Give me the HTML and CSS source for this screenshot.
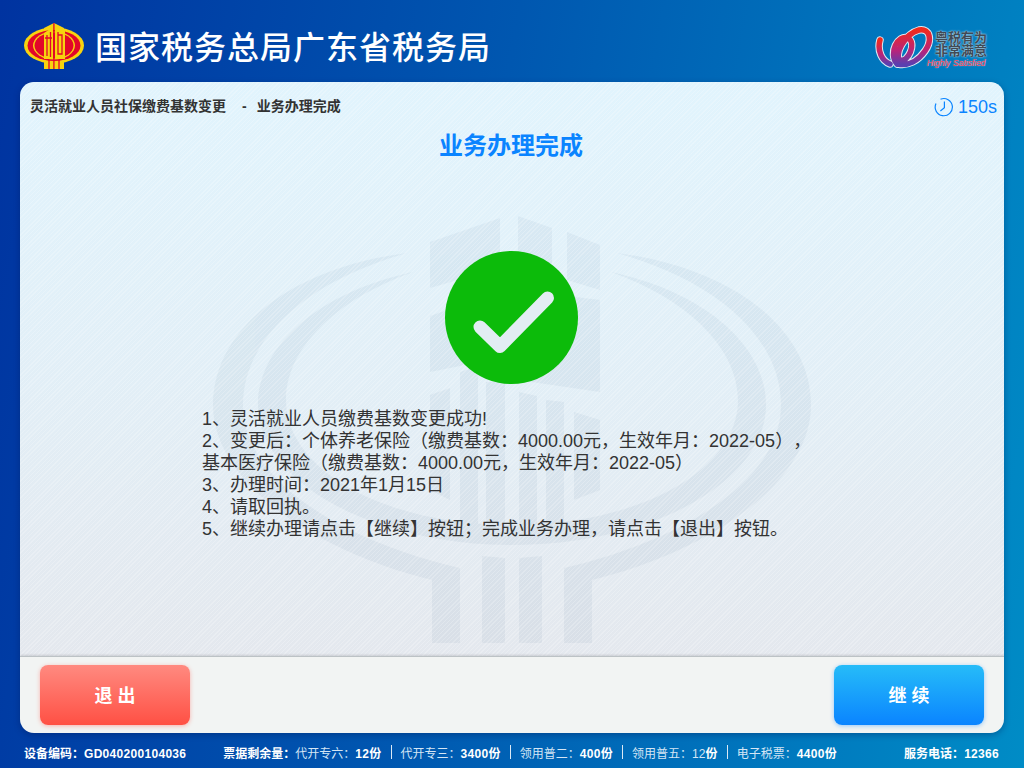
FILE: index.html
```html
<!DOCTYPE html>
<html lang="zh-CN">
<head>
    <meta charset="UTF-8" />
    <title>业务办理完成</title>
    <link rel="stylesheet" href="styles.css">
</head>
<body>
    <div class="page">
        <!-- Header -->
        <div class="header">
            <svg class="emblem" viewBox="0 0 60 46">
                <path d="M20 5 L30 0 L40 5 V10 H20 Z" fill="#f7d30f"/>
                <rect x="20" y="37" width="20" height="9" fill="#f7d30f"/>
                <ellipse cx="30" cy="22.500" rx="30" ry="18" fill="#f7d30f"/>
                <ellipse cx="30" cy="22.500" rx="26.500" ry="15.500" fill="#e2062a"/>
                <ellipse cx="30" cy="22.500" rx="21" ry="14" fill="#f7d30f"/>
                <ellipse cx="30" cy="22.500" rx="19.500" ry="13" fill="#e2062a"/>
                <path d="M20 10 L29 4 V36 H20 Z M31 4 L41 7 V36 H31 Z" fill="#f7d30f"/>
                <path d="M23 12 V33 M26.500 9 V34 M34 9 V31 H38 V12 H34 M29.900 0 V46 M25 37 V46 M35 37 V46 M21 15 H28" stroke="#e2062a" stroke-width="1.300" fill="none"/>
            </svg>
            <div class="site-name">国家税务总局广东省税务局</div>
            <div class="brand">
                <svg class="swirl" viewBox="875 22 60 46">
                    <defs>
                        <linearGradient id="swirl-grad" x1="0" y1="0" x2="0" y2="1">
                            <stop offset="0" stop-color="#f02a1c"/>
                            <stop offset="0.6" stop-color="#b8247a"/>
                            <stop offset="1" stop-color="#5a3fb0"/>
                        </linearGradient>
                    </defs>
                    <g fill="none" stroke-linecap="round">
                        <g stroke="#dfeaf2" stroke-width="7.500">
                            <path d="M880 39 C877 50 882 60 890 63"/>
                            <path d="M897 63 C888 52 898 33 908 37 C917 42 908 62 900 59 C894 55 904 33 919 29 C931 27 932 40 925 50 C918 60 908 65 898 63"/>
                        </g>
                        <g stroke="url(#swirl-grad)" stroke-width="5.500">
                            <path d="M880 39 C877 50 882 60 890 63"/>
                            <path d="M897 63 C888 52 898 33 908 37 C917 42 908 62 900 59 C894 55 904 33 919 29 C931 27 932 40 925 50 C918 60 908 65 898 63"/>
                        </g>
                    </g>
                </svg>
                <div class="brand-text">
                    <div>粤税有为</div>
                    <div>非常满意</div>
                    <div class="brand-en">Highly Satisfied</div>
                </div>
            </div>
        </div>

        <!-- Card -->
        <div class="card">
            <div class="main">
                <svg class="watermark" viewBox="20 82 984 574">
                    <g class="mark">
                        <path d="M407 253 C290 268 213 330 213 405 C213 480 310 550 432 580 L432 643 L460 643 L460 568 C340 540 243 480 243 405 C243 340 304 282 407 253 Z"/>
                        <path d="M617 253 C734 268 811 330 811 405 C811 480 714 550 592 580 L592 643 L564 643 L564 568 C684 540 781 480 781 405 C781 340 720 282 617 253 Z"/>
                        <path d="M413 272 C320 292 258 345 258 405 C258 480 370 545 512 545 C654 545 766 480 766 405 C766 345 704 292 611 272 C690 300 738 350 738 400 C738 470 640 525 512 525 C384 525 286 470 286 400 C286 350 334 300 413 272 Z"/>
                        <polygon points="430,242 500,218 500,268 430,288"/>
                        <polygon points="518,216 552,228 552,278 518,268"/>
                        <polygon points="567,232 600,245 600,290 567,280"/>
                        <polygon points="430,316 500,292 500,350 460,366 430,372"/>
                        <polygon points="518,290 600,300 600,392 518,380"/>
                        <polygon points="460,372 478,366 478,530 460,525"/>
                        <polygon points="486,382 505,382 505,530 486,530"/>
                        <polygon points="519,392 537,396 537,530 519,530"/>
                        <polygon points="546,400 564,402 564,525 546,528"/>
                        <polygon points="430,395 450,388 450,500 430,490"/>
                        <polygon points="574,412 600,420 600,490 574,500"/>
                        <polygon points="482,556 505,558 505,643 482,643"/>
                        <polygon points="519,558 542,556 542,643 519,643"/>
                    </g>
                </svg>
                <div class="content">
                    <div class="top-row">
                        <div class="crumb"><span>灵活就业人员社保缴费基数变更</span><span class="crumb-dash">-</span><span>业务办理完成</span></div>
                        <div class="timer">
                            <svg class="clock" viewBox="0 0 20 20">
                                <path d="M6.500 2.200 A8.600 8.600 0 1 1 2 6.500 M10.400 4.600 V10.600 L6.400 14" fill="none" stroke="#0a84ff" stroke-width="1.200"/>
                            </svg>
                            <span>150s</span>
                        </div>
                    </div>
                    <h1>业务办理完成</h1>
                    <svg class="ok-icon" viewBox="0 0 133 133">
                        <circle cx="66.500" cy="66.500" r="66.500" fill="#0cbb0a"/>
                        <path d="M35 76 L55 95.500 L102.500 47" fill="none" stroke="#e2edf3" stroke-width="13" stroke-linecap="round" stroke-linejoin="round"/>
                    </svg>
                    <div class="result">
                        <div>1、灵活就业人员缴费基数变更成功!</div>
                        <div>2、变更后：个体养老保险（缴费基数：4000.00元，生效年月：2022-05），基本医疗保险（缴费基数：4000.00元，生效年月：2022-05）</div>
                        <div>3、办理时间：2021年1月15日</div>
                        <div>4、请取回执。</div>
                        <div>5、继续办理请点击【继续】按钮；完成业务办理，请点击【退出】按钮。</div>
                    </div>
                </div>
            </div>
            <div class="actions">
                <button class="btn btn-exit" type="button">退 出</button>
                <button class="btn btn-next" type="button">继 续</button>
            </div>
        </div>

        <!-- Status bar -->
        <div class="status">
            <div class="status-device">设备编码：<b>GD040200104036</b></div>
            <div class="status-stock">
                <span class="stock-label">票据剩余量：</span>
                <span class="stock-item">代开专六：<b>12份</b></span>
                <i class="sep"></i>
                <span class="stock-item">代开专三：<b>3400份</b></span>
                <i class="sep"></i>
                <span class="stock-item">领用普二：<b>400份</b></span>
                <i class="sep"></i>
                <span class="stock-item">领用普五：12<b>份</b></span>
                <i class="sep"></i>
                <span class="stock-item">电子税票：<b>4400份</b></span>
            </div>
            <div class="status-phone">服务电话：<b>12366</b></div>
        </div>
    </div>
</body>
</html>
```

FILE: styles.css
```css
* {
    box-sizing: border-box;
}

body {
    margin: 0;
    font-family: "Liberation Sans", "Noto Sans CJK SC", sans-serif;
    color: #333;
    text-spacing-trim: space-all;
}

.page {
    width: 1024px;
    height: 768px;
    display: flex;
    flex-direction: column;
    overflow: hidden;
    background: linear-gradient(100deg, #0033a0 0%, #0057b0 45%, #008cc6 100%);
}

/* Header */
.header {
    height: 82px;
    flex: none;
    display: flex;
    align-items: center;
    padding: 0 33px 0 24px;
}

.emblem {
    width: 60px;
    height: 46px;
    margin-top: 10px;
}

.site-name {
    margin: 8px 0 0 11px;
    font-size: 32px;
    font-weight: 500;
    letter-spacing: 1px;
    color: #fff;
}

.brand {
    margin-left: auto;
    margin-top: 9px;
    display: flex;
    align-items: flex-start;
}

.swirl {
    width: 60px;
    height: 46px;
    margin-right: 1px;
}

.brand-text {
    width: 56px;
    margin-left: -1px;
    padding-top: 8px;
    font-size: 13px;
    line-height: 13px;
    font-weight: 700;
    color: #3f4a55;
    text-shadow: 0 0 2px #fff;
    white-space: nowrap;
}

.brand-en {
    margin: 1px 0 0 -8px;
    font-size: 8.5px;
    line-height: 10px;
    font-style: italic;
    font-weight: 400;
    color: #f0334a;
    text-shadow: 0 0 1px #fff;
}

/* Card */
.card {
    flex: 1;
    min-height: 0;
    margin: 0 20px;
    display: flex;
    flex-direction: column;
    border-radius: 14px;
    overflow: hidden;
    box-shadow: 0 2px 6px rgba(0, 20, 80, 0.35);
}

.main {
    flex: 1;
    position: relative;
    background: linear-gradient(to bottom, #e1f4fd, #e2eff7 50%, #e4e8ee);
}

/* thin diagonal hatch over the whole panel */
.main::after {
    content: "";
    position: absolute;
    inset: 0;
    background: repeating-linear-gradient(135deg, rgba(255, 255, 255, 0.22) 0 1px, transparent 1px 3px);
}

.watermark {
    position: absolute;
    left: 0;
    top: 0;
    width: 984px;
    height: 574px;
}

.mark {
    fill: #0b3a66;
    opacity: 0.045;
}

.content {
    position: relative;
    z-index: 1;
    padding: 0 12px 0 10px;
}

.top-row {
    display: flex;
    justify-content: space-between;
    align-items: center;
    height: 26px;
    margin-top: 12px;
}

.crumb {
    margin-top: -4px;
    font-size: 14px;
    font-weight: 700;
    color: #333;
}

.crumb-dash {
    margin: 0 10px 0 16px;
}

.timer {
    display: flex;
    align-items: center;
    margin-right: -5px;
    font-size: 18px;
    color: #0a84ff;
}

.clock {
    width: 20px;
    height: 20px;
    margin-right: 4px;
}

h1 {
    margin: 10px 0 0;
    text-align: center;
    font-size: 24px;
    line-height: 32px;
    font-weight: 700;
    color: #0a84ff;
}

.ok-icon {
    display: block;
    width: 133px;
    height: 133px;
    margin: 89px auto 0;
}

.result {
    width: 615px;
    margin: 24px 0 0 172px;
    font-size: 18px;
    line-height: 22px;
    color: #333;
}

/* Bottom buttons */
.actions {
    position: relative;
    z-index: 2;
    height: 77px;
    flex: none;
    display: flex;
    justify-content: space-between;
    padding: 8px 20px 0;
    background: #f2f4f3;
    border-top: 1px solid #bcc2c5;
    box-shadow: 0 -1px 2px rgba(0, 0, 0, 0.12);
}

.btn {
    width: 150px;
    height: 60px;
    padding: 0 0 2px;
    border: none;
    border-radius: 8px;
    font-family: inherit;
    font-size: 18px;
    font-weight: 700;
    color: #fff;
}

.btn-exit {
    background: linear-gradient(to bottom, #ff8a80, #ff5044);
    box-shadow: 0 1px 4px rgba(255, 80, 68, 0.4);
}

.btn-next {
    background: linear-gradient(to bottom, #26bcf8, #0a84ff);
    box-shadow: 0 1px 4px rgba(10, 132, 255, 0.4);
}

/* Status bar */
.status {
    height: 35px;
    flex: none;
    display: flex;
    align-items: center;
    padding: 3px 25px 0 24px;
    font-size: 12px;
    font-weight: 700;
    color: #fff;
    white-space: nowrap;
}

.status b {
    letter-spacing: 0.3px;
}

.status-stock {
    margin-left: 37px;
    display: flex;
    align-items: center;
}

.stock-item {
    font-weight: 400;
    color: #d5e6f5;
}

.stock-item b {
    color: #fff;
}

.sep {
    width: 1px;
    height: 14px;
    margin: 0 9px;
    background: #dce9f5;
}

.status-phone {
    margin-left: auto;
}
```
